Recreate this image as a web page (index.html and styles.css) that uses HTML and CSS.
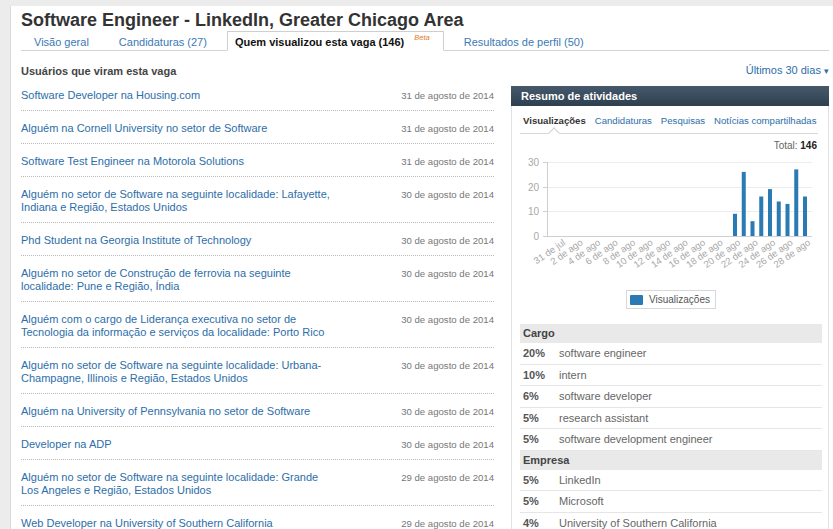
FILE: index.html
```html
<!DOCTYPE html>
<html lang="pt-BR">
<head>
<meta charset="utf-8">
<title>Software Engineer - LinkedIn, Greater Chicago Area</title>
<link rel="stylesheet" href="styles.css">
</head>
<body>
<div class="page">
  <h1 class="job-title">Software Engineer - LinkedIn, Greater Chicago Area</h1>

  <nav class="tabs">
    <a class="tab">Visão geral</a>
    <a class="tab">Candidaturas (27)</a>
    <span class="tab tab-active">Quem visualizou esta vaga (146)<sup class="beta">Beta</sup></span>
    <a class="tab">Resultados de perfil (50)</a>
  </nav>

  <div class="subhead">
    <h2 class="section-title">Usuários que viram esta vaga</h2>
    <a class="range">Últimos 30 dias <span class="range-caret">▾</span></a>
  </div>

  <div class="columns">
    <ul class="viewers">
      <li class="viewer"><a class="viewer-name">Software Developer na Housing.com</a><span class="viewer-date">31 de agosto de 2014</span></li>
      <li class="viewer"><a class="viewer-name">Alguém na Cornell University no setor de Software</a><span class="viewer-date">31 de agosto de 2014</span></li>
      <li class="viewer"><a class="viewer-name">Software Test Engineer na Motorola Solutions</a><span class="viewer-date">31 de agosto de 2014</span></li>
      <li class="viewer"><a class="viewer-name">Alguém no setor de Software na seguinte localidade: Lafayette,<br>Indiana e Região, Estados Unidos</a><span class="viewer-date">30 de agosto de 2014</span></li>
      <li class="viewer"><a class="viewer-name">Phd Student na Georgia Institute of Technology</a><span class="viewer-date">30 de agosto de 2014</span></li>
      <li class="viewer"><a class="viewer-name">Alguém no setor de Construção de ferrovia na seguinte<br>localidade: Pune e Região, Índia</a><span class="viewer-date">30 de agosto de 2014</span></li>
      <li class="viewer"><a class="viewer-name">Alguém com o cargo de Liderança executiva no setor de<br>Tecnologia da informação e serviços da localidade: Porto Rico</a><span class="viewer-date">30 de agosto de 2014</span></li>
      <li class="viewer"><a class="viewer-name">Alguém no setor de Software na seguinte localidade: Urbana-<br>Champagne, Illinois e Região, Estados Unidos</a><span class="viewer-date">30 de agosto de 2014</span></li>
      <li class="viewer"><a class="viewer-name">Alguém na University of Pennsylvania no setor de Software</a><span class="viewer-date">30 de agosto de 2014</span></li>
      <li class="viewer"><a class="viewer-name">Developer na ADP</a><span class="viewer-date">30 de agosto de 2014</span></li>
      <li class="viewer"><a class="viewer-name">Alguém no setor de Software na seguinte localidade: Grande<br>Los Angeles e Região, Estados Unidos</a><span class="viewer-date">29 de agosto de 2014</span></li>
      <li class="viewer"><a class="viewer-name">Web Developer na University of Southern California</a><span class="viewer-date">29 de agosto de 2014</span></li>
    </ul>

    <aside class="summary">
      <div class="summary-head">Resumo de atividades</div>
      <div class="summary-body">
        <div class="stat-tabs">
          <span class="stat-tab stat-tab-active">Visualizações</span>
          <a class="stat-tab">Candidaturas</a>
          <a class="stat-tab">Pesquisas</a>
          <a class="stat-tab">Notícias compartilhadas</a>
        </div>
        <div class="total">Total: <b>146</b></div>

        <!-- daily views, 31 jul to 28 ago; 0..30 maps to y 84..10 -->
        <svg class="chart" width="302" height="133" viewBox="0 0 302 133">
          <g class="grid">
            <line x1="27" y1="10.5" x2="292" y2="10.5"/>
            <line x1="27" y1="35.5" x2="292" y2="35.5"/>
            <line x1="27" y1="59.5" x2="292" y2="59.5"/>
          </g>
          <g class="axis">
            <line x1="27.5" y1="10" x2="27.5" y2="84"/>
            <line x1="23" y1="10.5" x2="27" y2="10.5"/>
            <line x1="23" y1="35.5" x2="27" y2="35.5"/>
            <line x1="23" y1="59.5" x2="27" y2="59.5"/>
            <line x1="23" y1="84.5" x2="292" y2="84.5"/>
          </g>
          <g class="y-labels">
            <text x="19" y="14">30</text>
            <text x="19" y="39">20</text>
            <text x="19" y="63">10</text>
            <text x="19" y="88">0</text>
          </g>
          <g class="bars">
            <rect x="213" y="61.8" width="4" height="22.2"/>
            <rect x="221.75" y="19.9" width="4" height="64.1"/>
            <rect x="230.5" y="69.2" width="4" height="14.8"/>
            <rect x="239.25" y="44.5" width="4" height="39.5"/>
            <rect x="248" y="37.1" width="4" height="46.9"/>
            <rect x="256.75" y="49.5" width="4" height="34.5"/>
            <rect x="265.5" y="51.9" width="4" height="32.1"/>
            <rect x="274.25" y="17.4" width="4" height="66.6"/>
            <rect x="283" y="44.5" width="4" height="39.5"/>
          </g>
          <g class="x-labels">
            <text transform="translate(46 92) rotate(-35)">31 de jul</text>
            <text transform="translate(63.5 92) rotate(-35)">2 de ago</text>
            <text transform="translate(81 92) rotate(-35)">4 de ago</text>
            <text transform="translate(98.5 92) rotate(-35)">6 de ago</text>
            <text transform="translate(116 92) rotate(-35)">8 de ago</text>
            <text transform="translate(133.5 92) rotate(-35)">10 de ago</text>
            <text transform="translate(151 92) rotate(-35)">12 de ago</text>
            <text transform="translate(168.5 92) rotate(-35)">14 de ago</text>
            <text transform="translate(186 92) rotate(-35)">16 de ago</text>
            <text transform="translate(203.5 92) rotate(-35)">18 de ago</text>
            <text transform="translate(221 92) rotate(-35)">20 de ago</text>
            <text transform="translate(238.5 92) rotate(-35)">22 de ago</text>
            <text transform="translate(256 92) rotate(-35)">24 de ago</text>
            <text transform="translate(273.5 92) rotate(-35)">26 de ago</text>
            <text transform="translate(291 92) rotate(-35)">28 de ago</text>
          </g>
        </svg>

        <div class="legend"><span class="legend-swatch"></span>Visualizações</div>

        <div class="facet-head">Cargo</div>
        <ul class="facet">
          <li class="facet-row"><span class="pct">20%</span><span class="facet-label">software engineer</span></li>
          <li class="facet-row"><span class="pct">10%</span><span class="facet-label">intern</span></li>
          <li class="facet-row"><span class="pct">6%</span><span class="facet-label">software developer</span></li>
          <li class="facet-row"><span class="pct">5%</span><span class="facet-label">research assistant</span></li>
          <li class="facet-row"><span class="pct">5%</span><span class="facet-label">software development engineer</span></li>
        </ul>

        <div class="facet-head">Empresa</div>
        <ul class="facet">
          <li class="facet-row"><span class="pct">5%</span><span class="facet-label">LinkedIn</span></li>
          <li class="facet-row"><span class="pct">5%</span><span class="facet-label">Microsoft</span></li>
          <li class="facet-row"><span class="pct">4%</span><span class="facet-label">University of Southern California</span></li>
        </ul>
      </div>
    </aside>
  </div>
</div>
</body>
</html>
```

FILE: styles.css
```css
* {
  box-sizing: border-box;
}

html, body {
  margin: 0;
  padding: 0;
}

body {
  background: #ececec;
  font-family: "Liberation Sans", Arial, sans-serif;
  color: #333;
  overflow: hidden;
}

a {
  color: #2c6ea9;
  text-decoration: none;
}

.page {
  margin: 6px 0 0 10px;
  padding: 4px 4px 0 10px;
  background: #fff;
  border-left: 1px solid #dadada;
  height: 523px;
}

/* heading + tab strip */
.job-title {
  margin: 0;
  font-size: 18px;
  line-height: 21px;
  font-weight: bold;
  color: #333;
}

.tabs {
  display: flex;
  height: 20px;
  padding-left: 3px;
  border-bottom: 1px solid #d3d3d3;
}

.tab {
  padding: 4px 10px 0;
  margin-right: 10px;
  font-size: 11px;
  line-height: 14px;
  color: #3a79b5;
  white-space: nowrap;
}

.tab-active {
  padding: 3px 13px 0 7px;
  margin-bottom: -1px;
  border: 1px solid #cfcfcf;
  border-bottom-color: #fff;
  background: #fff;
  color: #111;
  font-weight: bold;
}

.beta {
  margin-left: 10px;
  font-size: 7.5px;
  font-weight: normal;
  font-style: italic;
  color: #e07b1e;
  vertical-align: 6px;
  line-height: 0;
}

/* list heading row */
.subhead {
  display: flex;
  justify-content: space-between;
  align-items: center;
  height: 14px;
  margin-top: 13px;
}

.section-title {
  margin: 0;
  font-size: 11px;
  line-height: 14px;
  font-weight: bold;
  color: #444;
}

.range {
  font-size: 11px;
  line-height: 14px;
  margin-top: -2px;
  color: #2c6ea9;
}

.range-caret {
  font-size: 9px;
}

.columns {
  display: flex;
  align-items: flex-start;
  gap: 17px;
}

/* viewers list */
.viewers {
  width: 473px;
  margin: 0;
  padding: 0;
  list-style: none;
}

.viewer {
  display: flex;
  justify-content: space-between;
  align-items: flex-start;
  padding: 11px 0 8px;
  border-bottom: 1px dotted #b9b9b9;
  line-height: 13px;
}

.viewer-name {
  font-size: 11px;
  color: #2c6ea9;
  white-space: nowrap;
}

.viewer-date {
  font-size: 9.6px;
  color: #777;
  white-space: nowrap;
}

/* activity summary panel */
.summary {
  width: 318px;
  margin-top: 8px;
}

.summary-head {
  height: 20px;
  padding-left: 10px;
  background: linear-gradient(#46596b, #2e3f4f);
  color: #fff;
  font-size: 11px;
  font-weight: bold;
  line-height: 20px;
}

.summary-body {
  padding: 0 6px 0 8px;
  border: 1px solid #e2e2e2;
  border-top: none;
  height: 430px;
}

.stat-tabs {
  position: relative;
  display: flex;
  gap: 9px;
  margin-right: 4px;
  padding: 9px 0 6px 3px;
  border-bottom: 1px solid #d9d9d9;
  font-size: 9.6px;
  line-height: 12px;
  white-space: nowrap;
}

.stat-tab {
  color: #2c6ea9;
}

.stat-tab-active {
  position: relative;
  color: #333;
  font-weight: bold;
}

/* notch in the underline below the active tab */
.stat-tab-active::after {
  content: "";
  position: absolute;
  left: 50%;
  bottom: -10px;
  width: 7px;
  height: 7px;
  margin-left: -4px;
  background: #fff;
  border-top: 1px solid #cfcfcf;
  border-left: 1px solid #cfcfcf;
  transform: rotate(45deg);
}

.total {
  margin: 6px 5px 0 0;
  text-align: right;
  font-size: 10px;
  line-height: 12px;
  color: #666;
}

.total b {
  color: #222;
}

.chart {
  display: block;
}

.chart .grid line {
  stroke: #ececec;
  stroke-width: 1;
}

.chart .axis line {
  stroke: #cfcfcf;
  stroke-width: 1;
}

.chart text {
  font-family: "Liberation Sans", Arial, sans-serif;
  font-size: 9.5px;
  fill: #a8a8a8;
}

.chart .y-labels text {
  font-size: 10px;
  text-anchor: end;
}

.chart .x-labels text {
  text-anchor: end;
}

.chart .bars rect {
  fill: #2a7ab4;
}

.legend {
  display: flex;
  align-items: center;
  gap: 6px;
  width: fit-content;
  height: 19px;
  margin: 5px auto 0;
  padding: 0 5px 0 3px;
  border: 1px solid #d8d8d8;
  font-size: 10px;
  color: #555;
}

.legend-swatch {
  width: 13px;
  height: 10px;
  background: #2a7ab4;
  border-radius: 1px;
}

.facet-head {
  height: 19px;
  margin-top: 15px;
  padding-left: 3px;
  background: #e9e9e9;
  font-size: 11px;
  font-weight: bold;
  line-height: 19px;
  color: #444;
}

.facet + .facet-head {
  margin-top: 0;
}

.facet {
  margin: 0;
  padding: 0;
  list-style: none;
}

.facet-row {
  display: flex;
  align-items: center;
  height: 21.5px;
  border-bottom: 1px solid #e6e6e6;
  font-size: 11px;
}

.pct {
  width: 39px;
  padding-left: 3px;
  font-weight: bold;
  color: #555;
}

.facet-label {
  color: #666;
}
```
